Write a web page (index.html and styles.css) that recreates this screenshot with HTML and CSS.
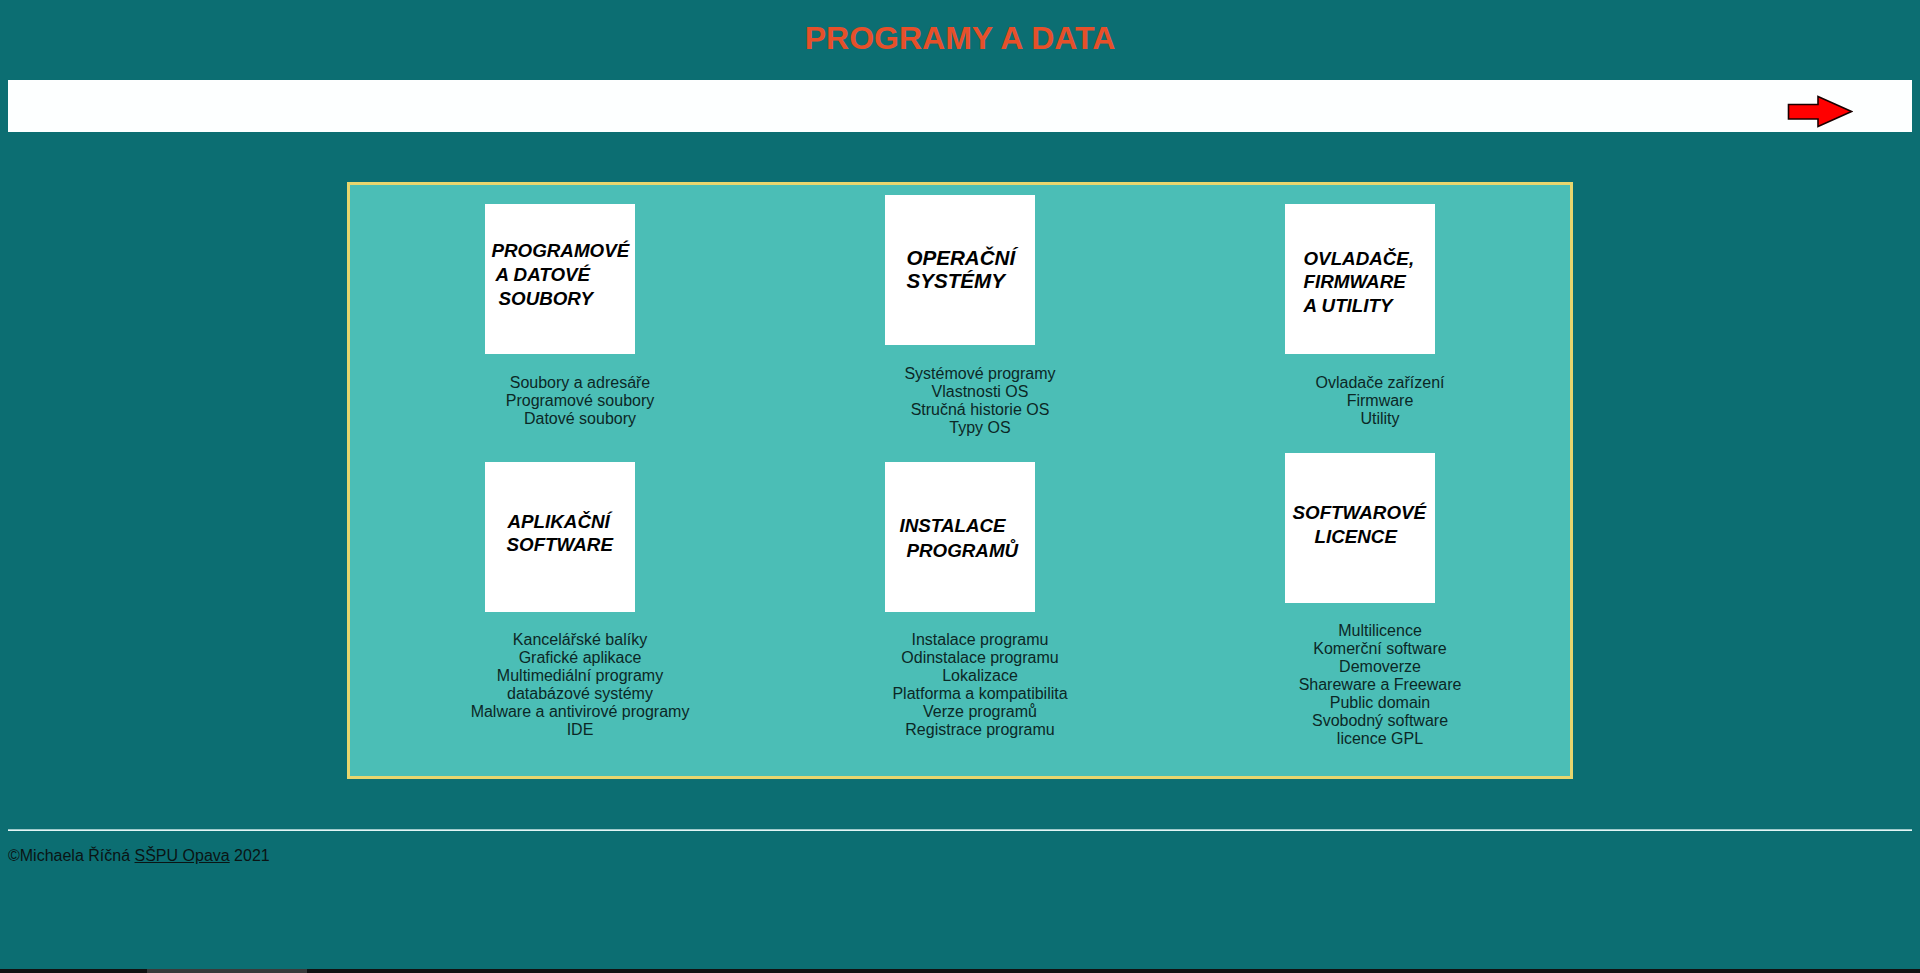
FILE: index.html
```html
<!DOCTYPE html>
<html lang="cs">
<head>
<meta charset="utf-8">
<title>Programy a data</title>
<link rel="stylesheet" href="styles.css">
</head>
<body>
<h1 class="title">PROGRAMY A DATA</h1>
<div class="bar">
  <svg class="arrow" viewBox="0 0 66 33" width="66" height="33" aria-hidden="true">
    <polygon points="1.5,9.5 31,9.5 31,1.5 64.5,16.5 31,31.5 31,24 1.5,24" fill="#ff0000" stroke="#1a0000" stroke-width="1.6" stroke-linejoin="miter"/>
  </svg>
</div>
<div class="box">
  <div class="cell">
    <div class="card c1"><span class="ln">PROGRAMOVÉ</span><span class="ln i4">A DATOVÉ</span><span class="ln i7">SOUBORY</span></div>
    <ul class="list">
      <li>Soubory a adresáře</li>
      <li>Programové soubory</li>
      <li>Datové soubory</li>
    </ul>
  </div>
  <div class="cell">
    <div class="card c2"><span class="ln">OPERAČNÍ</span><span class="ln">SYSTÉMY</span></div>
    <ul class="list">
      <li>Systémové programy</li>
      <li>Vlastnosti OS</li>
      <li>Stručná historie OS</li>
      <li>Typy OS</li>
    </ul>
  </div>
  <div class="cell">
    <div class="card c3"><span class="ln">OVLADAČE,</span><span class="ln">FIRMWARE</span><span class="ln">A UTILITY</span></div>
    <ul class="list">
      <li>Ovladače zařízení</li>
      <li>Firmware</li>
      <li>Utility</li>
    </ul>
  </div>
  <div class="cell">
    <div class="card c4"><span class="ln i1">APLIKAČNÍ</span><span class="ln">SOFTWARE</span></div>
    <ul class="list">
      <li>Kancelářské balíky</li>
      <li>Grafické aplikace</li>
      <li>Multimediální programy</li>
      <li>databázové systémy</li>
      <li>Malware a antivirové programy</li>
      <li>IDE</li>
    </ul>
  </div>
  <div class="cell">
    <div class="card c5"><span class="ln">INSTALACE</span><span class="ln i7">PROGRAMŮ</span></div>
    <ul class="list">
      <li>Instalace programu</li>
      <li>Odinstalace programu</li>
      <li>Lokalizace</li>
      <li>Platforma a kompatibilita</li>
      <li>Verze programů</li>
      <li>Registrace programu</li>
    </ul>
  </div>
  <div class="cell">
    <div class="card c6"><span class="ln">SOFTWAROVÉ</span><span class="ln i22">LICENCE</span></div>
    <ul class="list">
      <li>Multilicence</li>
      <li>Komerční software</li>
      <li>Demoverze</li>
      <li>Shareware a Freeware</li>
      <li>Public domain</li>
      <li>Svobodný software</li>
      <li>licence GPL</li>
    </ul>
  </div>
</div>
<hr class="rule">
<p class="foot">©Michaela Říčná <a class="link" href="#">SŠPU Opava</a> 2021</p>
<div class="hscroll"><div class="thumb"></div></div>
</body>
</html>
```

FILE: styles.css
```css
html {
  background: #0c6e72;
}

body {
  margin: 0;
  padding: 0 8px 8px;
  background: #0c6e72;
  font-family: "Liberation Sans", Arial, sans-serif;
  font-size: 16px;
  color: #000;
}

.title {
  margin: 0;
  padding: 20px 0 23px;
  line-height: 37px;
  text-align: center;
  color: #e6502a;
  font-size: 32px;
  font-weight: bold;
}

.bar {
  height: 52px;
  box-sizing: border-box;
  background: #fdffff;
  display: flex;
  justify-content: flex-end;
  align-items: flex-start;
  padding: 15px 59px 0 0;
}

.arrow {
  display: block;
  width: 66px;
  height: 33px;
}

.box {
  width: 1200px;
  margin: 50px auto;
  border: 3px solid #e8d66e;
  padding: 10px 10px 12px;
  background: #4bbeb6;
  display: grid;
  grid-template-columns: repeat(3, 400px);
  align-items: center;
}

.cell {
  display: flex;
  flex-direction: column;
  align-items: center;
}

.card {
  width: 150px;
  height: 150px;
  box-sizing: border-box;
  margin-bottom: 3.5px;
  background: #fff;
  color: #000;
  font-family: "Liberation Sans", Arial, sans-serif;
  font-style: italic;
  font-weight: bold;
  font-size: 18.8px;
  line-height: 24px;
}

.ln {
  display: block;
  white-space: nowrap;
}

.i1 { padding-left: 1px; }
.i4 { padding-left: 4px; }
.i7 { padding-left: 7px; }
.i22 { padding-left: 22px; }

.c1 { padding: 35.4px 0 0 6.5px; line-height: 24px; }
.c2 { padding: 51.2px 0 0 21.5px; font-size: 20.6px; line-height: 23px; }
.c3 { padding: 42.6px 0 0 18.5px; line-height: 23.5px; }
.c4 { padding: 48.8px 0 0 21.5px; line-height: 23px; }
.c5 { padding: 51.8px 0 0 14.5px; line-height: 25px; }
.c6 { padding: 48.4px 0 0 7.5px; line-height: 24px; }

.list {
  align-self: stretch;
  list-style: none;
  margin: 16px 0;
  padding: 0 0 0 40px;
  text-align: center;
  color: #0b2826;
}

.rule {
  height: 0;
  margin: 8px 0;
  border: 0;
  border-top: 1px solid #9cc9c9;
  border-bottom: 1px solid #e4f6f6;
}

.foot {
  margin: 16px 0;
  color: #0a1414;
}

.link {
  color: #0a1414;
  text-decoration: underline;
}

.hscroll {
  position: fixed;
  left: 0;
  right: 0;
  bottom: 0;
  height: 4px;
  background: #111;
}

.thumb {
  width: 160px;
  height: 4px;
  margin-left: 147px;
  background: #3a3a3a;
}
```
